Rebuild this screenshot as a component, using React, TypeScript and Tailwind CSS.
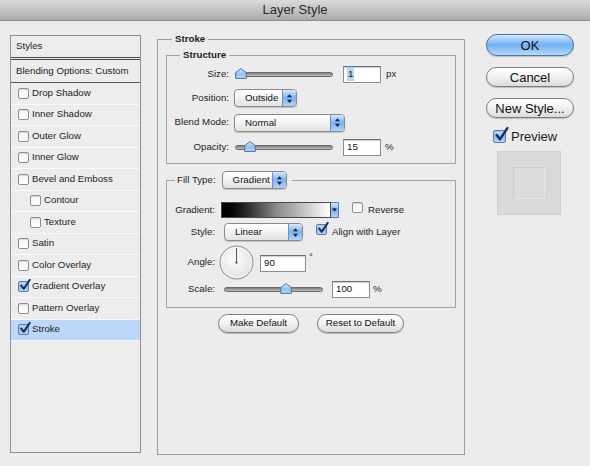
import React from "react";

const STYLE_ROWS: Array<{ label: string; checked?: boolean; indent?: boolean; active?: boolean }> = [
  { label: "Drop Shadow" },
  { label: "Inner Shadow" },
  { label: "Outer Glow" },
  { label: "Inner Glow" },
  { label: "Bevel and Emboss" },
  { label: "Contour", indent: true },
  { label: "Texture", indent: true },
  { label: "Satin" },
  { label: "Color Overlay" },
  { label: "Gradient Overlay", checked: true },
  { label: "Pattern Overlay" },
  { label: "Stroke", checked: true, active: true },
];

function Check({ checked, big }: { checked?: boolean; big?: boolean }) {
  const box = big ? "h-[13px] w-[13px]" : "h-[11px] w-[11px]";
  return (
    <span className={`relative inline-block shrink-0 ${box}`}>
      <span
        className={`block h-full w-full rounded-[2px] border ${
          checked
            ? "border-[#5a7bab] bg-gradient-to-b from-[#cfe4fb] via-[#8dbcef] to-[#b9d8f8]"
            : "border-[#8e8e8e] bg-gradient-to-b from-[#f4f4f4] to-[#ffffff]"
        } shadow-[inset_0_1px_1px_rgba(0,0,0,0.12)]`}
      />
      {checked && (
        <svg
          viewBox="0 0 14 14"
          className={`absolute ${big ? "-top-[3px] left-[1px] h-[15px] w-[15px]" : "-top-[2px] left-[1px] h-[12px] w-[12px]"}`}
          aria-hidden
        >
          <path d="M2.5 7.5 L5.5 11.5 L12.5 1" fill="none" stroke="#15305f" strokeWidth="2.2" strokeLinecap="round" strokeLinejoin="round" />
        </svg>
      )}
    </span>
  );
}

function Arrows() {
  return (
    <svg viewBox="0 0 8 12" className="h-[11px] w-[7px]" aria-hidden>
      <path d="M4 1 L7 4.5 L1 4.5 Z" fill="#16294d" />
      <path d="M4 11 L7 7.5 L1 7.5 Z" fill="#16294d" />
    </svg>
  );
}

function Popup({ label, className }: { label: string; className: string }) {
  return (
    <div
      className={`flex h-[18px] shrink-0 overflow-hidden rounded-[4px] border border-[#8a8a8a] bg-gradient-to-b from-[#ffffff] via-[#f3f3f3] to-[#e2e2e2] shadow-[0_1px_1px_rgba(0,0,0,0.18)] ${className}`}
    >
      <span className="flex-1 truncate pl-[10px] leading-[16px] text-[#111]">{label}</span>
      <span className="flex w-[14px] items-center justify-center border-l border-[#6d8fbf] bg-gradient-to-b from-[#d6e8fc] via-[#7db1ec] to-[#b3d4f7]">
        <Arrows />
      </span>
    </div>
  );
}

function Slider({ className, pos }: { className: string; pos: number }) {
  return (
    <div className={`relative flex h-[12px] shrink-0 items-center ${className}`}>
      <div className="h-[5px] w-full rounded-full border border-[#6a6a6a] bg-gradient-to-b from-[#7c7c7c] to-[#c2c2c2]" />
      <svg
        viewBox="0 0 12 11"
        className="absolute top-[0px] h-[11px] w-[12px]"
        style={{ left: pos }}
        aria-hidden
      >
        <defs>
          <linearGradient id="thumb" x1="0" y1="0" x2="0" y2="1">
            <stop offset="0" stopColor="#e3f0fd" />
            <stop offset="0.55" stopColor="#8fbff0" />
            <stop offset="1" stopColor="#c1dcf8" />
          </linearGradient>
        </defs>
        <path d="M6 0.6 L11.3 4.6 L11.3 10.4 L0.7 10.4 L0.7 4.6 Z" fill="url(#thumb)" stroke="#4d6f9c" strokeWidth="1" strokeLinejoin="round" />
      </svg>
    </div>
  );
}

function Field({ value, className, selected }: { value: string; className: string; selected?: boolean }) {
  return (
    <div
      className={`flex h-[17px] shrink-0 items-center border border-[#8c8c8c] border-t-[#6e6e6e] bg-white pl-[3px] shadow-[inset_0_1px_1px_rgba(0,0,0,0.2)] ${className}`}
    >
      <span className={selected ? "bg-[#b5d5fb] px-[1px] text-[#111]" : "text-[#111]"}>{value}</span>
    </div>
  );
}

function Pill({ label, className, blue }: { label: string; className: string; blue?: boolean }) {
  return (
    <div
      className={`flex shrink-0 items-center justify-center rounded-full border ${
        blue
          ? "border-[#4f73a6] bg-gradient-to-b from-[#d3e8fd] via-[#70b0f1] to-[#b6dafd]"
          : "border-[#7e7e7e] bg-gradient-to-b from-[#ffffff] via-[#f1f1f1] to-[#dcdcdc]"
      } shadow-[0_1px_1px_rgba(0,0,0,0.2)] text-[#111] ${className}`}
    >
      {label}
    </div>
  );
}

function Dial() {
  return (
    <svg viewBox="0 0 36 36" className="h-[35px] w-[35px] shrink-0" aria-hidden>
      <defs>
        <radialGradient id="dial" cx="0.45" cy="0.4" r="0.65">
          <stop offset="0" stopColor="#ffffff" />
          <stop offset="1" stopColor="#dedede" />
        </radialGradient>
      </defs>
      <circle cx="18" cy="18" r="17" fill="url(#dial)" stroke="#8a8a8a" strokeWidth="1" />
      <circle cx="18" cy="18" r="15.5" fill="none" stroke="#ffffff" strokeWidth="1" opacity="0.7" />
      <line x1="18" y1="18" x2="18" y2="3" stroke="#555" strokeWidth="1" />
      <rect x="17" y="17" width="2" height="2" fill="#444" />
    </svg>
  );
}

function StylesList() {
  return (
    <div className="ml-[10px] mt-[14px] flex h-[418px] w-[131px] shrink-0 flex-col border border-[#8f8f8f] bg-[#ededed]">
      <div className="flex h-[24px] shrink-0 items-center border-b-[3px] border-double border-[#4a4a4a] pl-[5px]">
        Styles
      </div>
      <div className="flex h-[23px] shrink-0 items-center border-b border-[#5a5a5a] pl-[5px]">
        Blending Options: Custom
      </div>
      {STYLE_ROWS.map((row) => (
        <div
          key={row.label}
          className={`flex h-[21.5px] shrink-0 items-center gap-[3px] border-b border-[#f9f9f9] ${
            row.indent ? "pl-[19px]" : "pl-[7px]"
          } ${row.active ? "bg-[#bcd7f8]" : ""}`}
        >
          <Check checked={row.checked} />
          <span>{row.label}</span>
        </div>
      ))}
    </div>
  );
}

function StrokePanel() {
  return (
    <fieldset className="ml-[16px] mt-[12px] h-[422px] w-[308px] shrink-0 border border-[#9c9c9c]">
      <legend className="ml-[14px] px-[3px] font-bold leading-[12px]">Stroke</legend>

      <fieldset className="mx-[8px] mt-[4px] h-[115px] border border-[#a2a2a2]">
        <legend className="ml-[13px] px-[3px] font-bold leading-[12px]">Structure</legend>
        <div className="flex flex-col gap-[6px] pt-[4px]">
          <div className="flex h-[18px] items-center">
            <span className="w-[62px] text-right">Size:</span>
            <Slider className="ml-[6px] w-[98px]" pos={0} />
            <Field value="1" selected className="ml-[10px] w-[38px]" />
            <span className="ml-[5px]">px</span>
          </div>
          <div className="flex h-[18px] items-center">
            <span className="w-[62px] text-right">Position:</span>
            <Popup label="Outside" className="ml-[5px] w-[63px]" />
          </div>
          <div className="flex h-[19px] items-center">
            <span className="w-[62px] text-right">Blend Mode:</span>
            <Popup label="Normal" className="ml-[5px] w-[111px]" />
          </div>
          <div className="flex h-[18px] items-center">
            <span className="w-[62px] text-right">Opacity:</span>
            <Slider className="ml-[6px] w-[98px]" pos={9} />
            <Field value="15" className="ml-[10px] w-[38px]" />
            <span className="ml-[4px]">%</span>
          </div>
        </div>
      </fieldset>

      <fieldset className="mx-[8px] mt-[7px] h-[137px] border border-[#a2a2a2]">
        <legend className="ml-[8px] px-[2px] pr-[5px]">
          <span className="flex items-center">
            <span>Fill Type:</span>
            <Popup label="Gradient" className="ml-[6px] w-[65px]" />
          </span>
        </legend>
        <div className="flex flex-col pt-[13px]">
          <div className="flex h-[16px] items-center">
            <span className="w-[48px] text-right">Gradient:</span>
            <div className="ml-[6px] flex h-[16px] shrink-0">
              <div className="h-full w-[110px] border border-[#4a4a4a] bg-gradient-to-r from-black via-[#8a8a8a] to-white" />
              <div className="flex h-full w-[8px] items-center justify-center border border-l-0 border-[#5e7fae] bg-gradient-to-b from-[#d5e8fc] via-[#7db1ec] to-[#b3d4f7]">
                <svg viewBox="0 0 6 4" className="h-[4px] w-[5px]" aria-hidden>
                  <path d="M0 0 L6 0 L3 4 Z" fill="#16294d" />
                </svg>
              </div>
            </div>
            <span className="ml-[13px]"><Check /></span>
            <span className="ml-[5px]">Reverse</span>
          </div>
          <div className="mt-[5px] flex h-[18px] items-center">
            <span className="w-[48px] text-right">Style:</span>
            <Popup label="Linear" className="ml-[9px] w-[79px]" />
            <span className="ml-[13px]"><Check checked /></span>
            <span className="ml-[5px]">Align with Layer</span>
          </div>
          <div className="mt-[4px] flex h-[35px] items-center">
            <span className="w-[48px] text-right">Angle:</span>
            <span className="ml-[4px]"><Dial /></span>
            <Field value="90" className="ml-[6px] mt-[1px] h-[16px] w-[46px]" />
            <span className="ml-[3px] -mt-[10px]">°</span>
          </div>
          <div className="mt-[1px] flex h-[16px] items-center">
            <span className="w-[48px] text-right">Scale:</span>
            <Slider className="ml-[9px] w-[99px]" pos={56} />
            <Field value="100" className="ml-[9px] h-[15px] w-[38px]" />
            <span className="ml-[3px]">%</span>
          </div>
        </div>
      </fieldset>

      <div className="mt-[6px] flex justify-center gap-[18px]">
        <Pill label="Make Default" className="h-[19px] w-[81px]" />
        <Pill label="Reset to Default" className="h-[19px] w-[87px]" />
      </div>
    </fieldset>
  );
}

function ActionColumn() {
  return (
    <div className="ml-[21px] mt-[13px] flex w-[88px] shrink-0 flex-col text-[13px] leading-[15px]">
      <Pill label="OK" blue className="h-[22px] w-[88px]" />
      <Pill label="Cancel" className="mt-[11px] h-[20px] w-[88px]" />
      <Pill label="New Style..." className="mt-[11px] h-[20px] w-[88px]" />
      <div className="mt-[11px] flex h-[14px] items-center pl-[7px]">
        <Check checked big />
        <span className="ml-[5px]">Preview</span>
      </div>
      <div className="ml-[11px] mt-[8px] flex h-[64px] w-[64px] items-center justify-center border border-[#cfcfcf] bg-[#d9d9d9]">
        <div className="h-[32px] w-[32px] border border-[#cbcbcb] border-b-[#e6e6e6] border-r-[#e6e6e6] bg-[#dcdcdc]" />
      </div>
    </div>
  );
}

export default function App() {
  return (
    <div className="flex h-[466px] w-[590px] flex-col overflow-hidden bg-[#ececec] font-['Liberation_Sans',Arial,sans-serif] text-[9.7px] text-[#1c1c1c]">
      <div className="flex h-[21px] shrink-0 items-center justify-center border-b border-[#8e8e8e] bg-gradient-to-b from-[#dcdcdc] to-[#ababab] text-[13px] text-[#2a2a2a]">
        Layer Style
      </div>
      <div className="flex items-start">
        <StylesList />
        <StrokePanel />
        <ActionColumn />
      </div>
    </div>
  );
}
